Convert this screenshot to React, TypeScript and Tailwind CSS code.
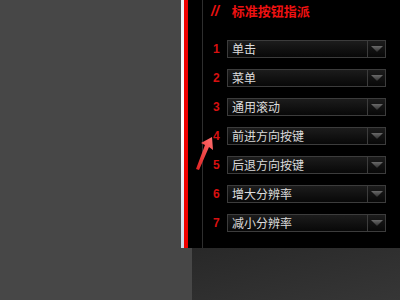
import React from "react";

const rows = ["单击", "菜单", "通用滚动", "前进方向按键", "后退方向按键", "增大分辨率", "减小分辨率"];

function Select({ label }: { label: string }) {
  return (
    <div className="flex h-[18px] w-[159px] border border-[#3c3c3c] bg-gradient-to-b from-[#1c1c1c] to-[#080808]">
      <div className="flex flex-1 items-center pl-[4px] text-[12px] leading-none text-[#dcdcdc]">{label}</div>
      <div className="flex w-[18px] items-center justify-center border-l border-[#3c3c3c]">
        <svg width="12" height="6" viewBox="0 0 12 6">
          <defs>
            <linearGradient id="tri" x1="0" y1="0" x2="0" y2="1">
              <stop offset="0" stopColor="#6a6a6a" />
              <stop offset="1" stopColor="#2e2e2e" />
            </linearGradient>
          </defs>
          <path d="M0 0 H12 L6 6 Z" fill="url(#tri)" />
        </svg>
      </div>
    </div>
  );
}

export default function App() {
  return (
    <div className="relative flex h-[300px] w-[400px] flex-col bg-[#474747] font-['Noto_Sans_CJK_SC',sans-serif]">
      <div className="flex h-[248px]">
        <div className="w-[181px]" />
        <div className="w-[3px] bg-gradient-to-b from-[#e8f0f4] via-[#ffffff] to-[#c8d8e8]" />
        <div className="w-[4px] bg-[#ee0000]" />
        <div className="w-[14px] bg-black" />
        <div className="w-px bg-[#2e2e2e]" />
        <div className="flex flex-1 flex-col bg-black pl-[8px]">
          <div className="flex h-[40px] items-start pt-[1px] text-[13px] font-bold text-[#ee1111]">
            <span className="mr-[13px] font-['Liberation_Sans',sans-serif] text-[14px] italic">//</span>
            <span>标准按钮指派</span>
          </div>
          <div className="flex flex-col gap-[11px]">
            {rows.map((r, i) => (
              <div key={r} className="flex items-center">
                <span className="w-[16px] pl-[2px] font-['Liberation_Sans',sans-serif] text-[12px] font-black text-[#d81010]">
                  {i + 1}
                </span>
                <Select label={r} />
              </div>
            ))}
          </div>
        </div>
      </div>
      <div className="flex flex-1">
        <div className="w-[192px]" />
        <div className="flex-1 bg-gradient-to-br from-[#282828] to-[#363636]" />
      </div>
      <svg className="absolute left-[193px] top-[134px]" width="24" height="40" viewBox="0 0 24 40">
        <defs>
          <linearGradient id="arr" x1="0" y1="1" x2="1" y2="0">
            <stop offset="0" stopColor="#e02020" />
            <stop offset="1" stopColor="#ff7070" />
          </linearGradient>
        </defs>
        <path d="M19 3 L20 16 L16 13 L6 36 L3 35 L12 11 L8 9 Z" fill="url(#arr)" />
      </svg>
    </div>
  );
}
